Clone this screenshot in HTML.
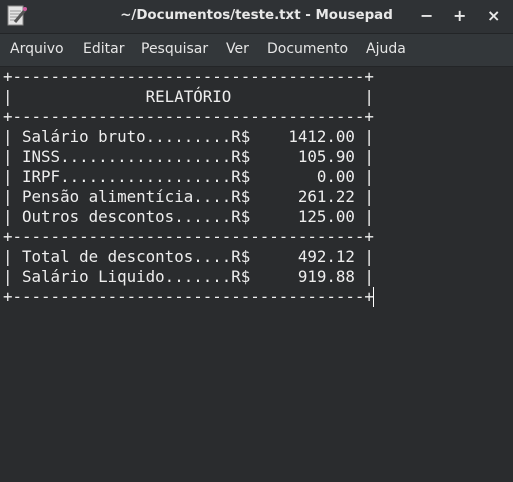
<!DOCTYPE html>
<html><head><meta charset="utf-8"><style>
html,body{margin:0;padding:0;width:513px;height:482px;overflow:hidden;background:#2a2c2e}
.title{position:absolute;left:0;top:0;width:513px;height:33px;background:#2f3235;border-bottom:1px solid #232527}
.title .t{position:absolute;left:0;width:513px;top:8px;text-align:center;color:#e8e8e8;font:bold 13.4px "DejaVu Sans","Liberation Sans",sans-serif}
.title .b{position:absolute;top:6px;color:#e8e8e8;font:bold 16px "DejaVu Sans",sans-serif}
.menu{position:absolute;left:0;top:34px;width:513px;height:32px;background:#33373a;border-bottom:1px solid #232527}
.menu span{position:absolute;top:7px;color:#e6e6e6;font:14px "DejaVu Sans","Liberation Sans",sans-serif}
.ed{position:absolute;left:0;top:67px;width:513px;height:415px;background:#2a2c2e}
pre{margin:0;padding:0 0 0 3px;color:#eeeeee;font:15.8px/20px "DejaVu Sans Mono","Liberation Mono",monospace}
.cur{position:absolute;left:373px;top:287px;width:1px;height:20px;background:#fff}
</style></head><body>
<div class="title">
<svg style="position:absolute;left:7px;top:5px" width="20" height="22" viewBox="0 0 20 22"><rect x="1" y="1" width="15" height="19" fill="#e4e4e4" stroke="#888"/><g stroke="#999"><line x1="3" y1="6" x2="14" y2="6"/><line x1="3" y1="9" x2="14" y2="9"/><line x1="3" y1="12" x2="12" y2="12"/><line x1="3" y1="15" x2="10" y2="15"/></g><line x1="8" y1="17" x2="18" y2="5" stroke="#555" stroke-width="3"/><circle cx="18" cy="4" r="2" fill="#d060a0"/></svg>
<div class="t">~/Documentos/teste.txt - Mousepad</div>
<div class="b" style="left:420px">−</div><div class="b" style="left:453px">+</div><div class="b" style="left:487px">×</div>
</div>
<div class="menu"><span style="left:10px">Arquivo</span><span style="left:83px">Editar</span><span style="left:141px">Pesquisar</span><span style="left:226px">Ver</span><span style="left:267px">Documento</span><span style="left:366px">Ajuda</span></div>
<div class="ed"><pre>+-------------------------------------+
|              RELATÓRIO              |
+-------------------------------------+
| Salário bruto.........R$    1412.00 |
| INSS..................R$     105.90 |
| IRPF..................R$       0.00 |
| Pensão alimentícia....R$     261.22 |
| Outros descontos......R$     125.00 |
+-------------------------------------+
| Total de descontos....R$     492.12 |
| Salário Liquido.......R$     919.88 |
+-------------------------------------+</pre></div>
<div class="cur"></div>
</body></html>
